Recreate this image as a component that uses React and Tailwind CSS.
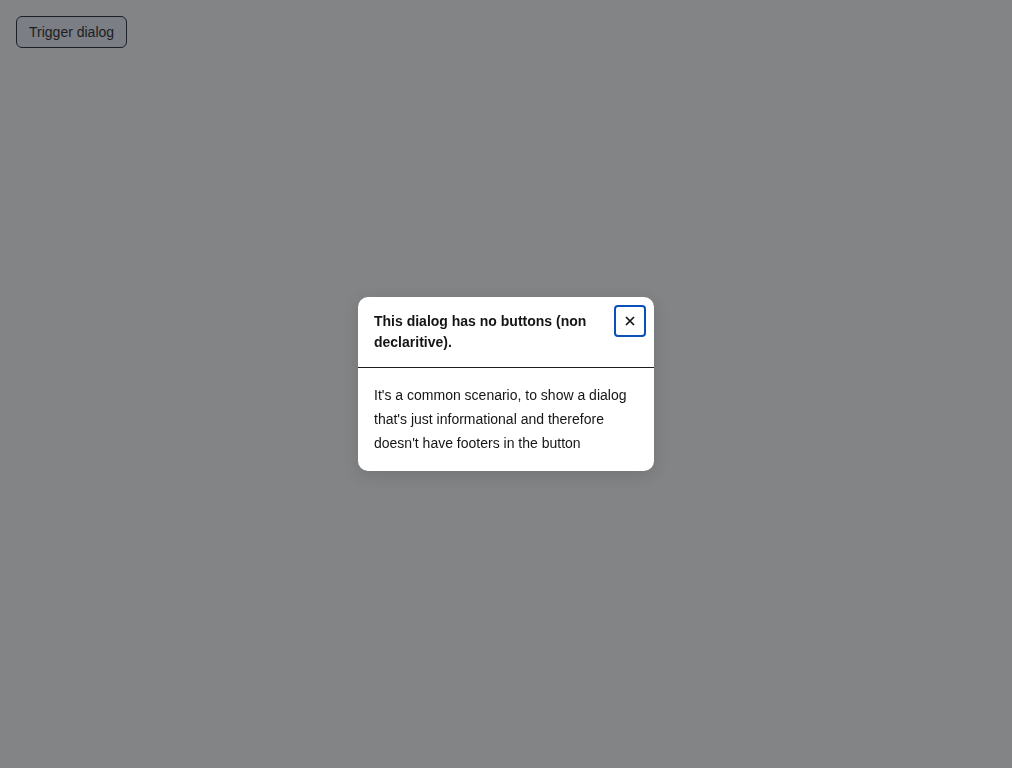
import React from 'react';

const App = () => {
    return (
        <div className="min-h-screen bg-[#838485] p-4 font-['Liberation_Sans',Arial,sans-serif]">
            <button className="h-8 px-3 rounded-md border border-[#1d2025] bg-[#7b7e84] text-sm text-[#1b1d21]">
                Trigger dialog
            </button>

            <div className="fixed inset-0 flex items-center justify-center">
                <div className="relative w-[296px] bg-white rounded-[10px] shadow-[0_4px_16px_rgba(0,0,0,0.12)]">
                    <div className="pl-4 pr-12 py-[14px] border-b border-[#1f1f1f]">
                        <h2 className="text-sm font-bold leading-[21px] text-[#151515]">
                            This dialog has no buttons (non declaritive).
                        </h2>
                    </div>
                    <button className="absolute top-2 right-2 w-8 h-8 flex items-center justify-center rounded border-2 border-[#0b4fb8] text-[#151515]">
                        <svg width="10" height="10" viewBox="0 0 10 10" fill="none" stroke="currentColor" strokeWidth="1.7">
                            <path d="M1 1L9 9M9 1L1 9" />
                        </svg>
                    </button>
                    <div className="px-4 pt-[15px] pb-4">
                        <p className="text-sm leading-6 text-[#151515]">
                            It's a common scenario, to show a dialog that's just informational and therefore doesn't have footers in the button
                        </p>
                    </div>
                </div>
            </div>
        </div>
    );
};

export default App;
